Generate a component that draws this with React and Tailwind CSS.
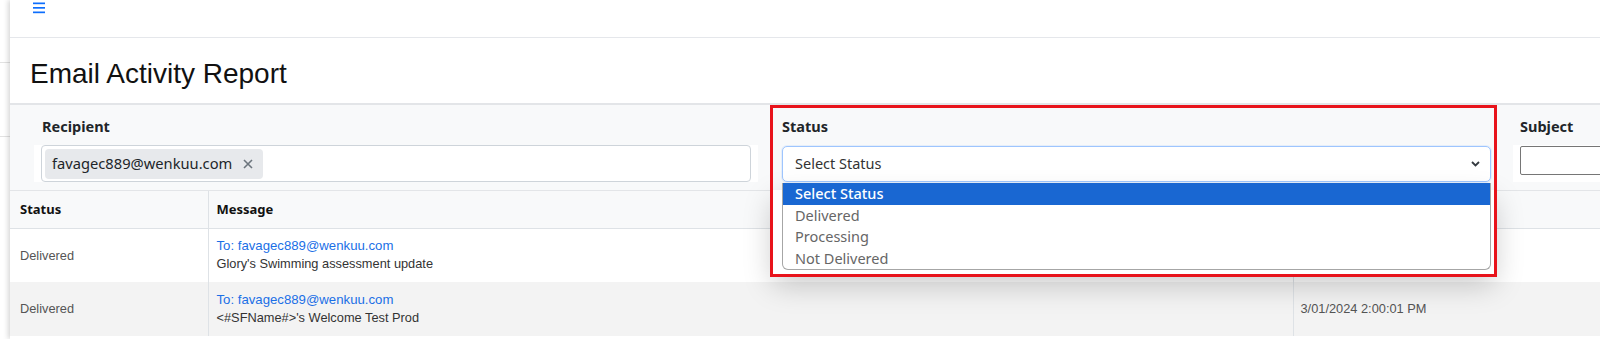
import React from 'react';

const ROWS = [
    { status: 'Delivered', to: 'favagec889@wenkuu.com', subject: "Glory's Swimming assessment update", date: '3/01/2024 2:00:01 PM' },
    { status: 'Delivered', to: 'favagec889@wenkuu.com', subject: "<#SFName#>'s Welcome Test Prod", date: '3/01/2024 2:00:01 PM' },
];

const OPTIONS = ['Select Status', 'Delivered', 'Processing', 'Not Delivered'];

export default function App() {
    return (
        <div className="w-[1600px] h-[339px] overflow-hidden bg-white flex font-['Noto_Sans',sans-serif] text-[#212529]">
            {/* collapsed sidebar */}
            <aside className="w-[10px] shrink-0 bg-white">
                <div className="h-[63px] border-b border-[#e2e2e2]" />
                <div className="h-[74px] border-b border-[#e2e2e2]" />
            </aside>

            <main className="relative z-10 flex-1 min-w-0 bg-white shadow-[-2px_0_5px_rgba(0,0,0,0.16)]">
                {/* top bar */}
                <div className="h-[38px] border-b border-[#e5e7eb] pl-[23px] pt-[2px]">
                    <svg width="12" height="12" viewBox="0 0 12 12" className="block">
                        <rect x="0" y="0.5" width="12" height="1.7" fill="#0d6efd" />
                        <rect x="0" y="5" width="12" height="1.7" fill="#0d6efd" />
                        <rect x="0" y="9.5" width="12" height="1.7" fill="#0d6efd" />
                    </svg>
                </div>

                {/* title */}
                <div className="h-[65px] pt-[6px] flex items-center pl-[20px]">
                    <h1 className="text-[28px] leading-none font-['Liberation_Sans',Arial,sans-serif] text-[#111]">Email Activity Report</h1>
                </div>

                {/* filters */}
                <div className="relative flex border-t-2 border-b border-[#e3e5e8] bg-[#f8f9fa] pl-[24px] pt-[11px] pb-[8px]">
                    <div className="w-[724px] shrink-0">
                        <div className="pl-[8px] h-[20px] leading-[20px] text-[14.5px] font-bold mb-[9px]">Recipient</div>
                        <div className="h-[37px] bg-white px-[7px]">
                            <div className="h-full border border-[#ced4da] rounded-[4px] flex items-center pl-[3px]">
                                <div className="h-[30px] bg-[#e7e9ec] rounded-[4px] flex items-center pl-[7px] pr-[10px] gap-[11px]">
                                    <span className="text-[14.7px] text-[#212529]">favagec889@wenkuu.com</span>
                                    <svg width="10" height="10" viewBox="0 0 10 10">
                                        <path d="M1 1L9 9M9 1L1 9" stroke="#6c757d" strokeWidth="1.6" />
                                    </svg>
                                </div>
                            </div>
                        </div>
                    </div>

                    <div className="relative w-[725px] ml-[15px] shrink-0">
                        <div className="pl-[9px] h-[20px] leading-[20px] text-[14.5px] font-bold mb-[10px]">Status</div>
                        <div className="ml-[9px] w-[709px] h-[36px] bg-white border border-[#9ec5fe] rounded-[5px] flex items-center justify-between pl-[12px] pr-[10px] shadow-[0_0_0_1px_rgba(13,110,253,0.08)]">
                            <span className="text-[14.5px] text-[#333]">Select Status</span>
                            <svg width="9" height="6" viewBox="0 0 9 6">
                                <path d="M1 1l3.5 3.5L8 1" stroke="#343a40" strokeWidth="1.8" fill="none" />
                            </svg>
                        </div>

                        {/* open popup */}
                        <div className="absolute z-20 left-0 top-[74px] w-[721px] h-[84px] bg-white shadow-[0_10px_30px_rgba(0,0,0,0.22)]" />
                        <div className="absolute z-30 left-[9px] top-[67px] w-[709px] bg-white border-x border-b border-[#a6a6a6] rounded-b-[6px] overflow-hidden">
                            {OPTIONS.map((opt, i) => (
                                <div
                                    key={opt}
                                    className={`h-[21.5px] leading-[21.5px] pl-[12px] text-[14.5px] ${i === 0 ? 'bg-[#1967d2] text-white font-medium' : 'text-[#666]'}`}
                                >
                                    {opt}
                                </div>
                            ))}
                        </div>
                        {/* highlight frame */}
                        <div className="absolute z-40 left-[-3px] top-[-11px] w-[727px] h-[172px] border-[3px] border-[#e8131b] pointer-events-none" />
                    </div>

                    <div className="w-[724px] ml-[15px] shrink-0">
                        <div className="pl-[7px] h-[20px] leading-[20px] text-[14.5px] font-bold mb-[9px]">Subject</div>
                        <div className="h-[37px] bg-white px-[7px] pt-[1px]">
                            <div className="h-[29px] border border-[#767676] rounded-[2px] bg-white" />
                        </div>
                    </div>
                </div>

                {/* results */}
                <table className="w-full table-fixed border-collapse font-['Liberation_Sans',Arial,sans-serif]">
                    <colgroup>
                        <col className="w-[198px]" />
                        <col className="w-[1085px]" />
                        <col />
                    </colgroup>
                    <thead>
                        <tr className="h-[37px] bg-[#f8f9fa] border-b border-[#dee2e6] font-['Noto_Sans',sans-serif] text-[13px] font-bold text-[#111]">
                            <th className="text-left pl-[10px] border-r border-[#dee2e6]">Status</th>
                            <th className="text-left pl-[8px] border-r border-[#dee2e6]">Message</th>
                            <th className="text-left pl-[7px]">Date</th>
                        </tr>
                    </thead>
                    <tbody>
                        {ROWS.map((row, i) => (
                            <tr key={i} className={`h-[54px] ${i % 2 === 1 ? 'bg-[#f3f3f3]' : 'bg-white'}`}>
                                <td className="pl-[10px] text-[12.8px] text-[#555] border-r border-[#dee2e6]">{row.status}</td>
                                <td className="pl-[8px] border-r border-[#dee2e6] leading-[18.5px]">
                                    <div className="text-[13.2px] text-[#1a6fe6]">To: {row.to}</div>
                                    <div className="text-[12.8px] text-[#333]">{row.subject}</div>
                                </td>
                                <td className="pl-[7px] text-[12.8px] text-[#555]">{row.date}</td>
                            </tr>
                        ))}
                    </tbody>
                </table>
            </main>
        </div>
    );
}
